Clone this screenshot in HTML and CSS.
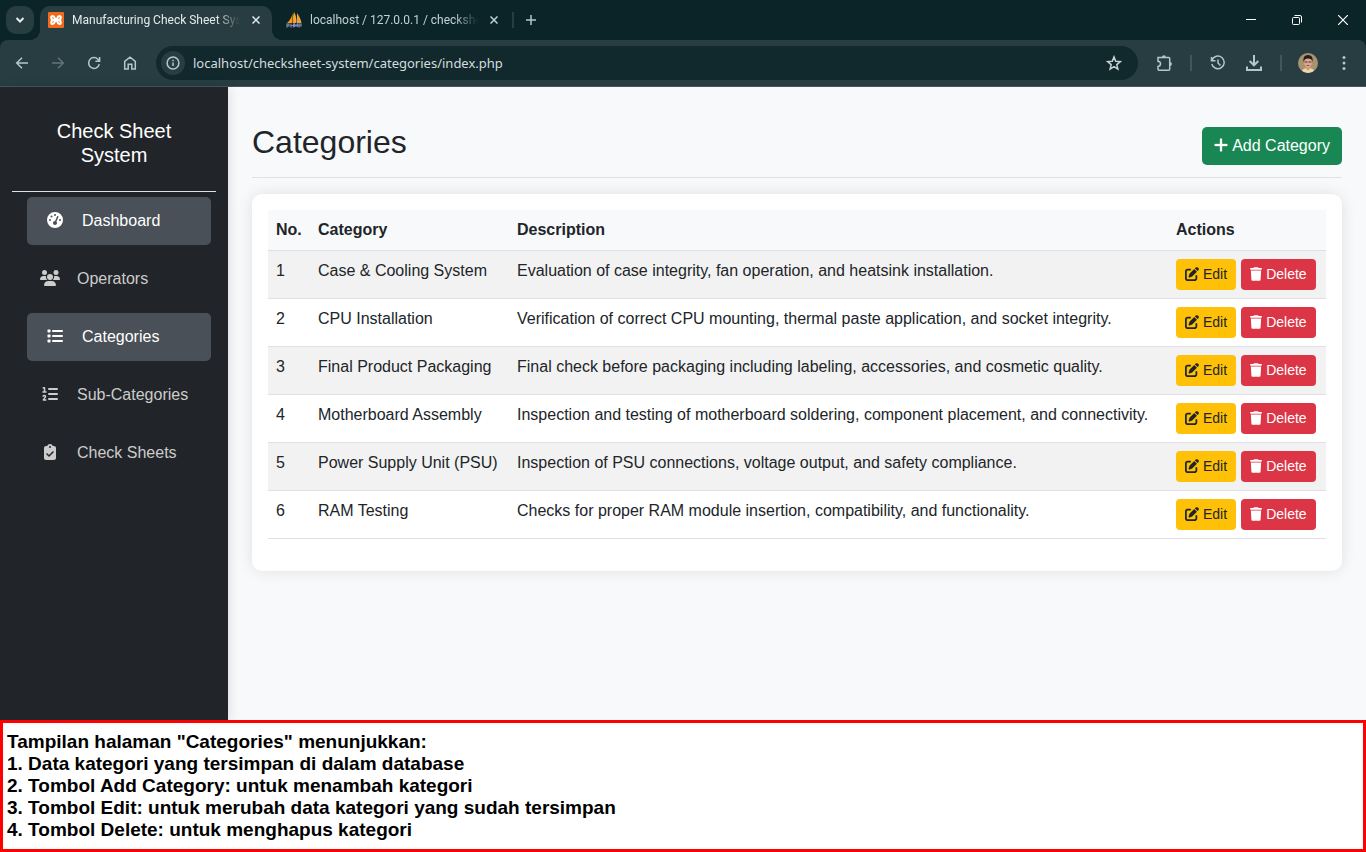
FILE: index.html
```html
<!DOCTYPE html>
<html lang="en">
<head>
<meta charset="utf-8">
<title>Manufacturing Check Sheet System</title>
<link rel="stylesheet" href="styles.css">
</head>
<body>
<svg class="sprite" aria-hidden="true">
  <symbol id="pen" viewBox="0 0 512 512"><path d="M471.6 21.7c-21.9-21.9-57.3-21.9-79.2 0L362.3 51.7l97.9 97.9 30.1-30.1c21.9-21.9 21.9-57.3 0-79.2L471.6 21.7zm-299.2 220c-6.1 6.1-10.8 13.6-13.5 21.9l-29.6 88.8c-2.9 8.6-.6 18.1 5.8 24.6s15.9 8.7 24.6 5.8l88.8-29.6c8.2-2.7 15.7-7.4 21.9-13.5L437.7 172.3 339.7 74.3 172.4 241.7zM96 64C43 64 0 107 0 160V416c0 53 43 96 96 96H352c53 0 96-43 96-96V320c0-17.7-14.3-32-32-32s-32 14.3-32 32v96c0 17.7-14.3 32-32 32H96c-17.7 0-32-14.3-32-32V160c0-17.7 14.3-32 32-32h96c17.7 0 32-14.3 32-32s-14.3-32-32-32H96z"/></symbol>
  <symbol id="trash" viewBox="0 0 448 512"><path d="M135.2 17.7L128 32H32C14.3 32 0 46.3 0 64S14.3 96 32 96H416c17.7 0 32-14.3 32-32s-14.3-32-32-32H320l-7.2-14.3C307.4 6.8 296.3 0 284.2 0H163.8c-12.1 0-23.2 6.8-28.6 17.7zM416 128H32L53.2 467c1.6 25.3 22.6 45 47.9 45H346.9c25.3 0 46.3-19.7 47.9-45L416 128z"/></symbol>
</svg>

<header class="browser">
  <div class="tabstrip">
    <button class="tab-search" aria-label="Search tabs"><svg width="10" height="10" viewBox="0 0 10 10"><path class="line bold" d="M1.500 3 5 6.500 8.500 3"/></svg></button>
    <div class="tab active">
      <svg class="favicon" width="16" height="16" viewBox="0 0 16 16"><rect width="16" height="16" rx="1" fill="#f26a1b"/><path d="M8 8C6.500 7.500 6.800 4 4.800 4S2.700 7.200 5 8c-2.300.8-2.200 4-.2 4S6.500 8.500 8 8s1.200 4 3.200 4 2.100-3.200-.2-4c2.300-.8 2.200-4 .2-4S9.500 7.500 8 8z" fill="none" stroke="#fff" stroke-width="2.200"/></svg>
      <span class="tab-title">Manufacturing Check Sheet Sys</span>
      <button class="tab-close" aria-label="Close tab"><svg width="8" height="8" viewBox="0 0 8 8"><path class="line" d="M.5.5l7 7M7.500.5l-7 7"/></svg></button>
    </div>
    <div class="tab">
      <svg class="favicon" width="16" height="16" viewBox="0 0 16 16"><path d="M6.500 1C6 5 4 8.500 1 11h5.500zM7 0v11h2.500z" fill="#f89c0e"/><path d="M11 1v10h4.500C15 7 13 4 11 1z" fill="#e8a33a"/><path d="M8 0C10 3 10.700 7 10.500 11H8z" fill="#f7a53a"/><path d="M1 15.500v-3.500h2v2H1M5 11.500v4M5 13.500h2M7.500 11.500v4M8.500 15v-3l1.500 2 1.500-2v3M13 15.500v-3.500h2v2h-2" fill="none" stroke="#8486b5" stroke-width="1.200"/></svg>
      <span class="tab-title">localhost / 127.0.0.1 / checkshe</span>
      <button class="tab-close" aria-label="Close tab"><svg width="8" height="8" viewBox="0 0 8 8"><path class="line" d="M.5.5l7 7M7.500.5l-7 7"/></svg></button>
    </div>
    <button class="new-tab" aria-label="New tab"><svg width="10" height="10" viewBox="0 0 10 10"><path class="line" d="M5 0v10M0 5h10"/></svg></button>
    <div class="window-buttons">
      <button aria-label="Minimize"><svg width="10" height="10" viewBox="0 0 10 10"><path d="M0 4.500h10" stroke="#fff"/></svg></button>
      <button aria-label="Restore"><svg width="10" height="10" viewBox="0 0 10 10"><rect x=".5" y="2.500" width="7" height="7" rx="1" fill="none" stroke="#fff"/><path d="M2.500.5H8A1.500 1.500 0 0 1 9.500 2v5.500" fill="none" stroke="#fff"/></svg></button>
      <button aria-label="Close"><svg width="10" height="10" viewBox="0 0 10 10"><path d="M0 0l10 10M10 0L0 10" stroke="#fff" stroke-width="1.200"/></svg></button>
    </div>
  </div>
  <div class="toolbar">
    <div class="nav-buttons">
      <button aria-label="Back"><svg width="16" height="16" viewBox="0 0 16 16"><path class="line" d="M14 8H3M8 2.700 2.700 8 8 13.300"/></svg></button>
      <button aria-label="Forward" class="dim"><svg width="16" height="16" viewBox="0 0 16 16"><path class="line" d="M2 8h11M8 2.700 13.300 8 8 13.300"/></svg></button>
      <button aria-label="Reload"><svg width="16" height="16" viewBox="0 0 16 16"><path class="line" d="M13.300 9.200A5.400 5.400 0 1 1 11.900 4.200L13.500 5.800M13.600 2v4.200H9.400"/></svg></button>
      <button aria-label="Home"><svg width="16" height="16" viewBox="0 0 16 16"><path class="line" d="M2.700 6.300 8 2.200l5.300 4.100V14H9.800V9.300H6.200V14H2.700z"/></svg></button>
    </div>
    <div class="omnibox">
      <button class="site-info" aria-label="Site information"><svg width="16" height="16" viewBox="0 0 16 16"><circle class="line" cx="8" cy="8" r="5.900"/><path class="line" d="M8 7.400v3.600M8 4.700v1.500"/></svg></button>
      <input class="url" aria-label="Address" value="localhost/checksheet-system/categories/index.php">
      <button class="star" aria-label="Bookmark"><svg width="16" height="16" viewBox="0 0 16 16"><path class="line" d="M8 1.900l1.700 4.300 4.600.4-3.500 3 1.100 4.500L8 11.700l-3.900 2.400 1.100-4.500-3.500-3 4.600-.4z"/></svg></button>
    </div>
    <button class="tool" aria-label="Extensions"><svg width="18" height="18" viewBox="0 0 18 18"><path class="line" d="M3 3.500h10.700q1 0 1 1v10.700q0 1-1 1H4q-1 0-1-1V12.500q2.500-.3 2.500-2.700T3 7.200z"/><path fill="#b2c8ca" d="M7 3.200a1.900 1.900 0 0 1 3.800 0zM15 8a1.900 1.900 0 0 1 0 3.800z"/></svg></button>
    <span class="divider"></span>
    <button class="tool" aria-label="History"><svg width="16" height="16" viewBox="0 0 16 16"><path class="line" d="M2 5.200A6.300 6.300 0 1 1 1.800 9M1.500 2v3.800h4M8 4.500V8l2.500 2.500"/></svg></button>
    <button class="tool" aria-label="Downloads"><svg width="18" height="18" viewBox="0 0 18 18"><path class="line heavy" d="M9 1v10M4.700 7 9 11.300 13.300 7M2 12.500V16h14v-3.500"/></svg></button>
    <span class="divider"></span>
    <button class="avatar" aria-label="Profile"><svg width="20" height="20" viewBox="0 0 20 20"><defs><clipPath id="round"><circle cx="10" cy="10" r="10"/></clipPath></defs><g clip-path="url(#round)"><rect width="20" height="20" fill="#a89370"/><path d="M3 20q1-5 7-5t7 5z" fill="#ecd9ab"/><path d="M8 12h4v4l-2 1.500L8 16z" fill="#cf9a80"/><ellipse cx="10" cy="9" rx="4" ry="5.500" fill="#dda78e"/><path d="M5.500 9Q4.500 2 10 2t4.500 7L13.500 6.500Q10 4.500 6.800 6.500z" fill="#241c1d"/><path d="M6.500 9h3M10.500 9h3" stroke="#4a3535"/><path d="M8.500 12.500h3" stroke="#9c4c49"/></g></svg></button>
    <button class="more" aria-label="Menu"><svg width="4" height="16" viewBox="0 0 4 16" fill="#b2c8ca"><circle cx="2" cy="2.500" r="1.500"/><circle cx="2" cy="8" r="1.500"/><circle cx="2" cy="13.500" r="1.500"/></svg></button>
  </div>
</header>

<div class="page">
  <nav class="sidebar">
    <h2 class="brand">Check Sheet System</h2>
    <ul class="menu">
      <li><a class="menu-link current" href="#dashboard"><span class="menu-icon"><svg width="16" height="16" viewBox="0 0 512 512"><path d="M0 256a256 256 0 1 1 512 0A256 256 0 1 1 0 256zM288 96a32 32 0 1 0 -64 0 32 32 0 1 0 64 0zM256 416c35.300 0 64-28.700 64-64c0-17.400-6.900-33.100-18.100-44.600L366 161.700c5.300-12.100-.2-26.300-12.300-31.600s-26.300 .2-31.600 12.300L257.900 288c-.6 0-1.300 0-1.900 0c-35.300 0-64 28.700-64 64s28.700 64 64 64zM176 144a32 32 0 1 0 -64 0 32 32 0 1 0 64 0zM96 288a32 32 0 1 0 0-64 32 32 0 1 0 0 64zm352-32a32 32 0 1 0 -64 0 32 32 0 1 0 64 0z"/></svg></span>Dashboard</a></li>
      <li><a class="menu-link" href="#operators"><span class="menu-icon"><svg width="20" height="16" viewBox="0 0 640 512"><path d="M144 0a80 80 0 1 1 0 160A80 80 0 1 1 144 0zM512 0a80 80 0 1 1 0 160A80 80 0 1 1 512 0zM0 298.700C0 239.800 47.800 192 106.700 192h42.700c15.900 0 31 3.500 44.600 9.700c-1.300 7.200-1.900 14.700-1.900 22.300c0 38.200 16.800 72.500 43.300 96H21.300C9.600 320 0 310.400 0 298.700zM405.300 320c26.600-23.500 43.300-57.800 43.300-96c0-7.600-.7-15-1.900-22.300c13.600-6.300 28.700-9.700 44.600-9.700h42.700C592.200 192 640 239.800 640 298.700c0 11.800-9.600 21.300-21.300 21.300H405.300zM224 224a96 96 0 1 1 192 0 96 96 0 1 1 -192 0zM128 485.300C128 411.700 187.700 352 261.300 352H378.700C452.300 352 512 411.700 512 485.300c0 14.700-11.900 26.700-26.700 26.700H154.700c-14.700 0-26.700-11.900-26.700-26.700z"/></svg></span>Operators</a></li>
      <li><a class="menu-link current" href="#categories"><span class="menu-icon"><svg width="16" height="16" viewBox="0 0 512 512"><rect x="16" y="48" width="96" height="96" rx="24"/><rect x="16" y="208" width="96" height="96" rx="24"/><rect x="16" y="368" width="96" height="96" rx="24"/><rect x="160" y="64" width="352" height="64" rx="32"/><rect x="160" y="224" width="352" height="64" rx="32"/><rect x="160" y="384" width="352" height="64" rx="32"/></svg></span>Categories</a></li>
      <li><a class="menu-link" href="#sub-categories"><span class="menu-icon"><svg width="16" height="16" viewBox="0 0 512 512"><rect x="192" y="64" width="320" height="64" rx="32"/><rect x="192" y="224" width="320" height="64" rx="32"/><rect x="192" y="384" width="320" height="64" rx="32"/><path d="M40 58h40v124M32 190h96M36 326c20-36 76-28 76 6 0 24-26 44-68 116h80" fill="none" stroke="currentColor" stroke-width="50" stroke-linecap="round" stroke-linejoin="round"/></svg></span>Sub-Categories</a></li>
      <li><a class="menu-link" href="#check-sheets"><span class="menu-icon"><svg width="12" height="16" viewBox="0 0 384 512"><path d="M192 0c-41.800 0-77.400 26.700-90.500 64H64C28.700 64 0 92.700 0 128V448c0 35.300 28.700 64 64 64H320c35.300 0 64-28.700 64-64V128c0-35.300-28.700-64-64-64H282.500C269.400 26.700 233.800 0 192 0zm0 64a32 32 0 1 1 0 64 32 32 0 1 1 0-64zM305 273L177 401c-9.400 9.400-24.600 9.400-33.900 0L79 337c-9.400-9.400-9.400-24.600 0-33.900s24.600-9.400 33.900 0l47 47L271 239c9.400-9.400 24.600-9.400 33.900 0s9.400 24.600 0 33.900z"/></svg></span>Check Sheets</a></li>
    </ul>
  </nav>

  <main class="content">
    <div class="page-head">
      <h1>Categories</h1>
      <button class="btn btn-add"><svg width="14" height="16" viewBox="0 0 448 512"><path stroke="currentColor" stroke-width="10" d="M256 80c0-17.700-14.300-32-32-32s-32 14.300-32 32V224H48c-17.700 0-32 14.300-32 32s14.300 32 32 32H192V432c0 17.700 14.300 32 32 32s32-14.300 32-32V288H400c17.700 0 32-14.300 32-32s-14.300-32-32-32H256V80z"/></svg>Add Category</button>
    </div>
    <section class="card">
      <table class="grid">
        <colgroup><col class="col-no"><col class="col-name"><col><col class="col-actions"></colgroup>
        <thead><tr><th>No.</th><th>Category</th><th>Description</th><th>Actions</th></tr></thead>
        <tbody>
          <tr><td>1</td><td>Case &amp; Cooling System</td><td>Evaluation of case integrity, fan operation, and heatsink installation.</td><td><div class="actions"><button class="btn btn-edit"><svg width="14" height="14"><use href="#pen"/></svg>Edit</button><button class="btn btn-delete"><svg width="12" height="14"><use href="#trash"/></svg>Delete</button></div></td></tr>
          <tr><td>2</td><td>CPU Installation</td><td>Verification of correct CPU mounting, thermal paste application, and socket integrity.</td><td><div class="actions"><button class="btn btn-edit"><svg width="14" height="14"><use href="#pen"/></svg>Edit</button><button class="btn btn-delete"><svg width="12" height="14"><use href="#trash"/></svg>Delete</button></div></td></tr>
          <tr><td>3</td><td>Final Product Packaging</td><td>Final check before packaging including labeling, accessories, and cosmetic quality.</td><td><div class="actions"><button class="btn btn-edit"><svg width="14" height="14"><use href="#pen"/></svg>Edit</button><button class="btn btn-delete"><svg width="12" height="14"><use href="#trash"/></svg>Delete</button></div></td></tr>
          <tr><td>4</td><td>Motherboard Assembly</td><td>Inspection and testing of motherboard soldering, component placement, and connectivity.</td><td><div class="actions"><button class="btn btn-edit"><svg width="14" height="14"><use href="#pen"/></svg>Edit</button><button class="btn btn-delete"><svg width="12" height="14"><use href="#trash"/></svg>Delete</button></div></td></tr>
          <tr><td>5</td><td>Power Supply Unit (PSU)</td><td>Inspection of PSU connections, voltage output, and safety compliance.</td><td><div class="actions"><button class="btn btn-edit"><svg width="14" height="14"><use href="#pen"/></svg>Edit</button><button class="btn btn-delete"><svg width="12" height="14"><use href="#trash"/></svg>Delete</button></div></td></tr>
          <tr><td>6</td><td>RAM Testing</td><td>Checks for proper RAM module insertion, compatibility, and functionality.</td><td><div class="actions"><button class="btn btn-edit"><svg width="14" height="14"><use href="#pen"/></svg>Edit</button><button class="btn btn-delete"><svg width="12" height="14"><use href="#trash"/></svg>Delete</button></div></td></tr>
        </tbody>
      </table>
    </section>
  </main>
</div>

<aside class="note" lang="id">
  <p>Tampilan halaman "Categories" menunjukkan:</p>
  <p>1. Data kategori yang tersimpan di dalam database</p>
  <p>2. Tombol Add Category: untuk menambah kategori</p>
  <p>3. Tombol Edit: untuk merubah data kategori yang sudah tersimpan</p>
  <p>4. Tombol Delete: untuk menghapus kategori</p>
</aside>
</body>
</html>
```
FILE: styles.css
```css
* { box-sizing: border-box; }

body {
  margin: 0;
  min-height: 100vh;
  display: flex;
  flex-direction: column;
  font: 16px/24px "Liberation Sans", Arial, sans-serif;
  color: #212529;
  background: #f8f9fa;
}

button {
  display: flex;
  align-items: center;
  justify-content: center;
  padding: 0;
  border: 0;
  background: none;
  color: inherit;
  font: inherit;
}

svg { display: block; flex: none; fill: currentColor; }
.sprite { position: absolute; width: 0; height: 0; }

/* Browser frame */
.browser {
  background: #0b2428;
  color: #b2c8ca;
  font: 12px/20px Roboto, "Open Sans", sans-serif;
}
.line { fill: none; stroke: currentColor; stroke-width: 1.5; }
.bold { stroke-width: 2; }
.heavy { stroke-width: 2; }

.tabstrip { display: flex; height: 40px; padding-left: 6px; }
.tab-search {
  width: 28px;
  height: 28px;
  margin: 6px 6px 0 0;
  border-radius: 10px;
  background: #283d41;
  color: #e3ebeb;
}
.tab {
  position: relative;
  display: flex;
  align-items: center;
  width: 232px;
  height: 34px;
  margin-top: 6px;
  padding: 0 12px 6px 8px;
  color: #c0d2d4;
}
.tab + .tab { width: 238px; padding-left: 14px; margin-right: 2px; }
.tab.active { background: #283d41; border-radius: 10px 10px 0 0; color: #e3ebeb; }
.tab.active::before,
.tab.active::after {
  content: "";
  position: absolute;
  bottom: 0;
  width: 10px;
  height: 10px;
}
.tab.active::before { right: 100%; background: radial-gradient(circle at 0 0, transparent 10px, #283d41 10px); }
.tab.active::after { left: 100%; background: radial-gradient(circle at 100% 0, transparent 10px, #283d41 10px); }
.tab-title {
  flex: 1;
  min-width: 0;
  margin: 0 12px 0 8px;
  overflow: hidden;
  white-space: nowrap;
  -webkit-mask-image: linear-gradient(to left, transparent, #000 24px);
  mask-image: linear-gradient(to left, transparent, #000 24px);
}
.new-tab {
  width: 36px;
  height: 16px;
  margin-top: 12px;
  border-left: 2px solid #283d41;
}
.window-buttons { display: flex; margin-left: auto; }
.window-buttons button { width: 46px; height: 40px; }

.toolbar {
  display: flex;
  align-items: center;
  height: 47px;
  padding: 0 12px 0 4px;
  border-radius: 8px 8px 0 0;
  border-bottom: 1px solid #43585b;
  background: #283d41;
}
.nav-buttons { display: flex; }
.nav-buttons button { width: 36px; height: 34px; }
.nav-buttons .dim { color: #627477; }
.omnibox {
  display: flex;
  align-items: center;
  flex: 1;
  min-width: 0;
  height: 34px;
  margin: 0 8px;
  padding: 0 12px 0 5px;
  border-radius: 17px;
  background: #11292d;
}
.site-info { width: 24px; height: 24px; border-radius: 12px; background: #283d41; }
.url {
  flex: 1;
  min-width: 0;
  margin-left: 8px;
  padding: 0;
  border: 0;
  background: none;
  color: #d3dddd;
  font: 13px/20px "Noto Sans", "Open Sans", sans-serif;
}
.star { width: 24px; height: 24px; color: #c5d2d3; }
.tool { width: 36px; height: 34px; }
.divider { width: 2px; height: 16px; margin: 0 8px; background: #40575b; }
.avatar { width: 36px; height: 34px; }
.more { width: 20px; height: 34px; margin-left: 8px; }

/* Application */
.page { flex: 1; display: flex; }
.sidebar {
  width: 228px;
  flex: none;
  padding: 8px 12px;
  background: #212529;
  box-shadow: 2px 0 10px rgba(0, 0, 0, 0.1);
}
.brand {
  margin: 0 0 5px;
  padding: 24px 40px;
  border-bottom: 1px solid #dee2e6;
  color: #fff;
  font-size: 20px;
  font-weight: 400;
  line-height: 24px;
  text-align: center;
}
.menu {
  display: grid;
  gap: 10px;
  margin: 0 5px 0 15px;
  padding: 0;
  list-style: none;
}
.menu-link {
  display: flex;
  align-items: center;
  gap: 15px;
  padding: 12px 10px;
  border-radius: 5px;
  color: #ccc;
  text-decoration: none;
}
.menu-link.current { padding-left: 15px; background: #495057; color: #fff; }
.menu-icon { display: flex; justify-content: center; width: 25px; padding-bottom: 2px; }

.content { flex: 1; min-width: 0; padding: 28px 24px; }
.page-head {
  display: flex;
  align-items: center;
  justify-content: space-between;
  margin-bottom: 16px;
  padding: 8px 0;
  border-bottom: 1px solid #dee2e6;
}
h1 { margin: 0 0 8px; font-size: 32px; font-weight: 400; line-height: 38px; }

.btn { border-radius: 4px; color: #fff; white-space: nowrap; }
.btn svg { margin-bottom: 2px; }
.btn-add { gap: 4px; height: 38px; padding: 0 12px; border-radius: 5px; background: #198754; }
.btn-edit, .btn-delete { gap: 4px; height: 31px; padding: 0 9px; font-size: 14px; line-height: 21px; }
.btn-edit { background: #ffc107; color: #212529; }
.btn-delete { background: #dc3545; }
.actions { display: flex; gap: 5px; }

.card {
  padding: 16px 16px 32px;
  border-radius: 10px;
  background: #fff;
  box-shadow: 0 0 15px rgba(0, 0, 0, 0.1);
}
.grid { width: 100%; border-collapse: separate; border-spacing: 0; table-layout: fixed; }
.col-no { width: 42px; }
.col-name { width: 199px; }
.col-actions { width: 158px; }
.grid th, .grid td {
  padding: 8px;
  border-bottom: 1px solid #dee2e6;
  text-align: left;
  vertical-align: top;
}
.grid th { background: #f8f9fa; font-weight: 700; }
.grid tbody tr:nth-child(odd) { background: #f2f2f2; }

/* Caption under the window */
.note {
  position: relative;
  padding: 8px 4px;
  border: 3px solid #f00;
  background: #fff;
  color: #000;
  font-size: 19px;
  font-weight: 700;
  line-height: 22px;
}
.note p { margin: 0; }
```
